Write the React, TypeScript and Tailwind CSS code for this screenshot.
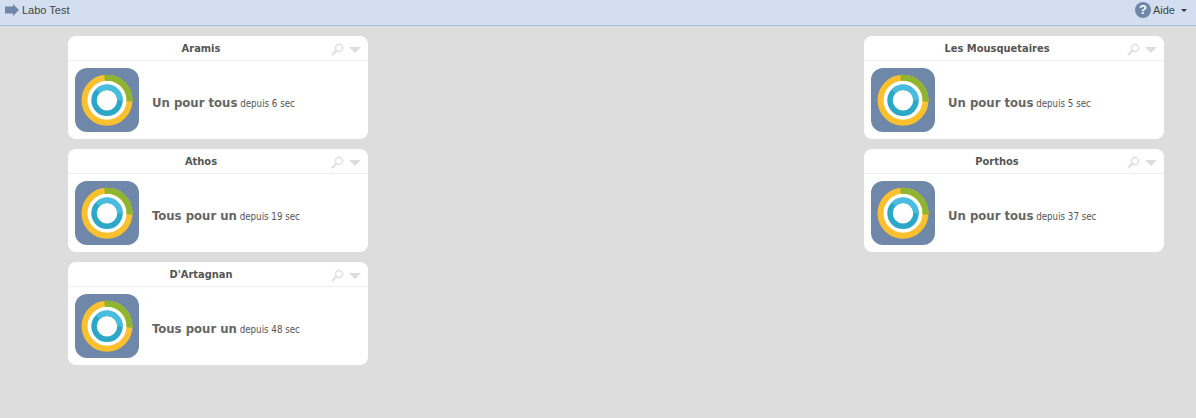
const Logo = () => (
  <svg width="64" height="64" viewBox="0 0 64 64" className="shrink-0 block">
    <rect width="64" height="64" rx="12" fill="#6f87a8" />
    <circle cx="32" cy="32.3" r="22.5" fill="#ffffff" />
    <circle cx="32" cy="32.3" r="22.5" fill="none" stroke="#fbc02d" strokeWidth="6" />
    <path d="M29.6 9.9 A22.5 22.5 0 0 1 54.5 33.5" fill="none" stroke="#8eb52f" strokeWidth="6" />
    <circle cx="32" cy="32.3" r="13" fill="none" stroke="#2ba8c8" strokeWidth="5.5" />
    <path d="M22.8 23.1 A13 13 0 0 1 45 32.3" fill="none" stroke="#48bde0" strokeWidth="5.5" />
  </svg>
);

const Lens = () => (
  <svg width="13" height="13" viewBox="0 0 13 13" className="block">
    <circle cx="8" cy="5" r="3.6" fill="none" stroke="#e2e2e2" strokeWidth="1.6" />
    <path d="M5.3 7.7 L1.6 11.4" stroke="#e2e2e2" strokeWidth="2.4" strokeLinecap="round" />
  </svg>
);

function Card({ name, msg, since }: { name: string; msg: string; since: string }) {
  return (
    <div className="bg-white rounded-[8px] w-[300px] h-[103px] text-[#555]">
      <div className="relative h-[25px] border-b border-[#eeeeee] flex items-center justify-center pr-[34px]">
        <span className="font-bold text-[11px] leading-[25px] text-[#555]">{name}</span>
        <div className="absolute right-[7px] top-[7px] flex items-center gap-[5px]">
          <Lens />
          <div className="w-0 h-0 mt-[1px] border-x-[6px] border-x-transparent border-t-[6px] border-t-[#dddddd]" />
        </div>
      </div>
      <div className="flex items-center px-[7px] pt-[7px]">
        <Logo />
        <div className="ml-[13px] mt-[6px] whitespace-nowrap text-[9.7px]">
          <span className="font-bold text-[13px] text-[#666]">{msg}</span>{" "}
          <span className="text-[#555]">{since}</span>
        </div>
      </div>
    </div>
  );
}

export default function App() {
  return (
    <div
      className="h-[418px] bg-[#dddddd] overflow-hidden"
      style={{ fontFamily: '"DejaVu Sans Condensed", "DejaVu Sans", sans-serif', fontStretch: "condensed" }}
    >
      <header className="h-[26px] bg-[#d3dff0] border-b border-[#a8c0e0] flex items-center justify-between pl-[5px] pr-[9px] text-[11px] text-[#444] font-['Liberation_Sans',sans-serif]">
        <div className="flex items-center gap-[3px] -mt-[5px]">
          <svg width="14" height="12" viewBox="0 0 14 12" className="block">
            <path d="M0 2.5 H8 V0 L14 6 L8 12 V9.5 H0 Z" fill="#6f87a8" />
          </svg>
          <span>Labo Test</span>
        </div>
        <div className="flex items-center -mt-[5px]">
          <div className="w-[16px] h-[16px] rounded-full bg-[#6f87a8] text-white font-bold text-[13px] leading-[16px] text-center mr-[2px]">?</div>
          <span>Aide</span>
          <div className="ml-[6px] w-0 h-0 border-x-[3px] border-x-transparent border-t-[3px] border-t-[#333]" />
        </div>
      </header>
      <main className="flex justify-between pl-[68px] pr-[32px] pt-[10px]">
        <div className="flex flex-col gap-[10px]">
          <Card name="Aramis" msg="Un pour tous" since="depuis 6 sec" />
          <Card name="Athos" msg="Tous pour un" since="depuis 19 sec" />
          <Card name="D'Artagnan" msg="Tous pour un" since="depuis 48 sec" />
        </div>
        <div className="flex flex-col gap-[10px]">
          <Card name="Les Mousquetaires" msg="Un pour tous" since="depuis 5 sec" />
          <Card name="Porthos" msg="Un pour tous" since="depuis 37 sec" />
        </div>
      </main>
    </div>
  );
}
